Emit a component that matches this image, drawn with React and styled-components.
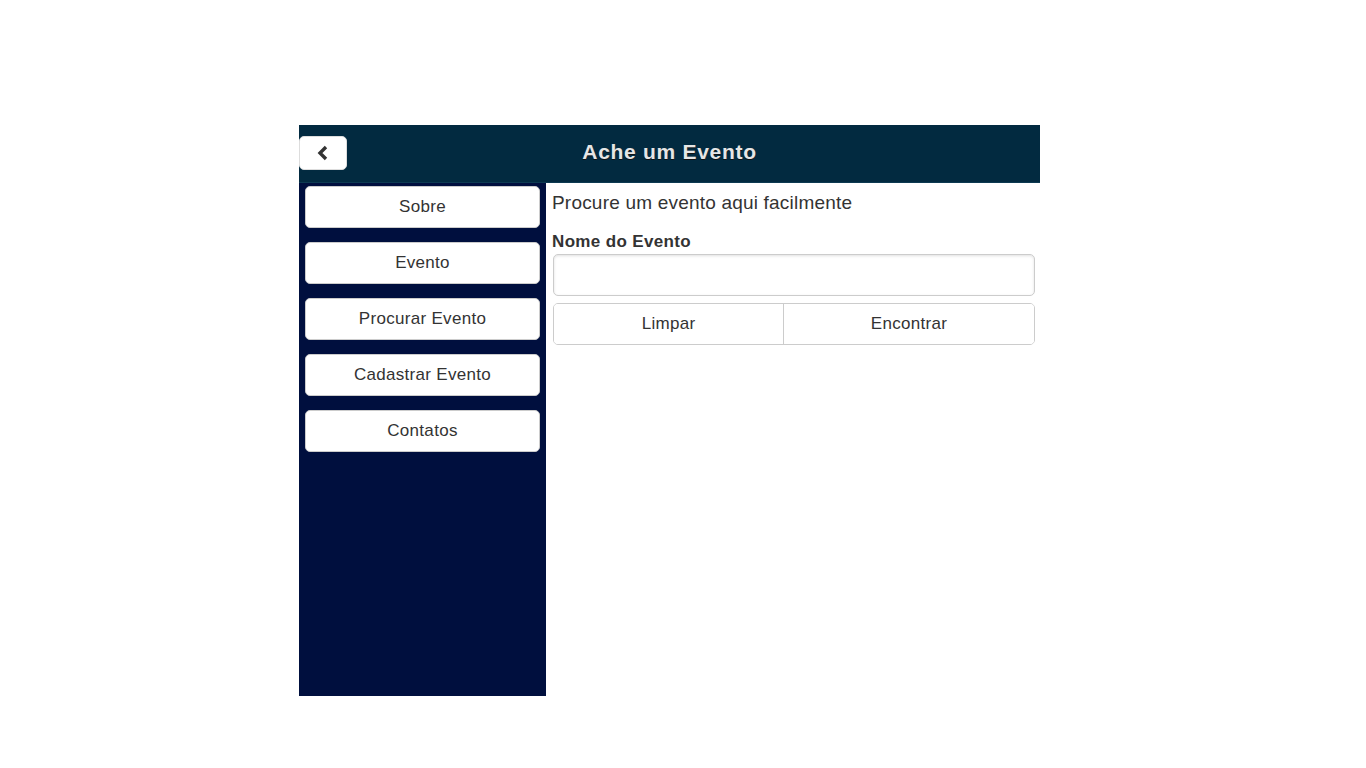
import React from 'react'
import styled, { createGlobalStyle } from 'styled-components'

const Global = createGlobalStyle`
  html, body { margin: 0; padding: 0; background: #fff; }
  body { font-family: "Liberation Sans", Arial, sans-serif; }
`

const Page = styled.div`
  width: 1366px;
  height: 768px;
  padding-top: 125px;
  box-sizing: border-box;
`

const Frame = styled.div`
  width: 741px;
  margin-left: 299px;
  display: flex;
  flex-direction: column;
`

const Header = styled.header`
  height: 58px;
  background: #022a40;
  border-bottom: 1px solid #0d3a52;
  box-sizing: border-box;
  position: relative;
  display: flex;
  align-items: center;
  justify-content: center;
  padding-bottom: 3px;
`

const Title = styled.h1`
  margin: 0;
  font-size: 21px;
  letter-spacing: 0.7px;
  font-weight: bold;
  color: #e6e6e6;
  text-shadow: 0 1px 0 #111;
`

const BackButton = styled.button`
  position: absolute;
  left: 0;
  top: 11px;
  width: 48px;
  height: 34px;
  background: #fff;
  border: 1px solid #ddd;
  border-radius: 5px;
  display: flex;
  align-items: center;
  justify-content: center;
  padding: 0;
`

const Body = styled.div`
  display: flex;
  height: 513px;
`

const Sidebar = styled.nav`
  width: 247px;
  background: #000f3e;
  padding: 3px 6px 0 6px;
  box-sizing: border-box;
  display: flex;
  flex-direction: column;
  gap: 14px;
`

const NavButton = styled.button`
  height: 42px;
  width: 100%;
  background: #fff;
  border: 1px solid #ccc;
  border-radius: 5px;
  font-family: "Liberation Sans", Arial, sans-serif;
  font-size: 17px;
  letter-spacing: 0.3px;
  color: #333;
  box-sizing: border-box;
`

const Content = styled.main`
  flex: 1;
  padding: 8px 5px 0 6px;
  display: flex;
  flex-direction: column;
`

const Intro = styled.p`
  margin: 0;
  font-size: 19px;
  letter-spacing: 0.2px;
  color: #333;
  line-height: 24px;
`

const Label = styled.label`
  margin-top: 18px;
  font-size: 17px;
  letter-spacing: 0.35px;
  font-weight: bold;
  color: #333;
  line-height: 18px;
`

const Input = styled.input`
  margin-top: 3px;
  height: 42px;
  box-sizing: border-box;
  border: 1px solid #ccc;
  border-radius: 5px;
  background: #fff;
  box-shadow: inset 0 1px 3px rgba(0,0,0,0.12);
  margin-left: 1px;
  outline: none;
`

const Group = styled.div`
  margin-top: 7px;
  margin-left: 1px;
  display: flex;
  height: 42px;
  border: 1px solid #ccc;
  border-radius: 5px;
  box-sizing: border-box;
  overflow: hidden;
`

const GroupButton = styled.button`
  flex: ${({ grow }) => grow};
  background: #fff;
  border: none;
  border-left: ${({ first }) => (first ? 'none' : '1px solid #ccc')};
  font-family: "Liberation Sans", Arial, sans-serif;
  font-size: 17px;
  letter-spacing: 0.3px;
  color: #333;
`

const items = ['Sobre', 'Evento', 'Procurar Evento', 'Cadastrar Evento', 'Contatos']

export default function App() {
  return (
    <Page>
      <Global />
      <Frame>
        <Header>
          <BackButton>
            <svg width="14" height="16" viewBox="0 0 14 16">
              <path d="M10 2 L4 8 L10 14" fill="none" stroke="#333" strokeWidth="3.4" />
            </svg>
          </BackButton>
          <Title>Ache um Evento</Title>
        </Header>
        <Body>
          <Sidebar>
            {items.map((t) => (
              <NavButton key={t}>{t}</NavButton>
            ))}
          </Sidebar>
          <Content>
            <Intro>Procure um evento aqui facilmente</Intro>
            <Label>Nome do Evento</Label>
            <Input />
            <Group>
              <GroupButton first grow={230}>Limpar</GroupButton>
              <GroupButton grow={252}>Encontrar</GroupButton>
            </Group>
          </Content>
        </Body>
      </Frame>
    </Page>
  )
}
